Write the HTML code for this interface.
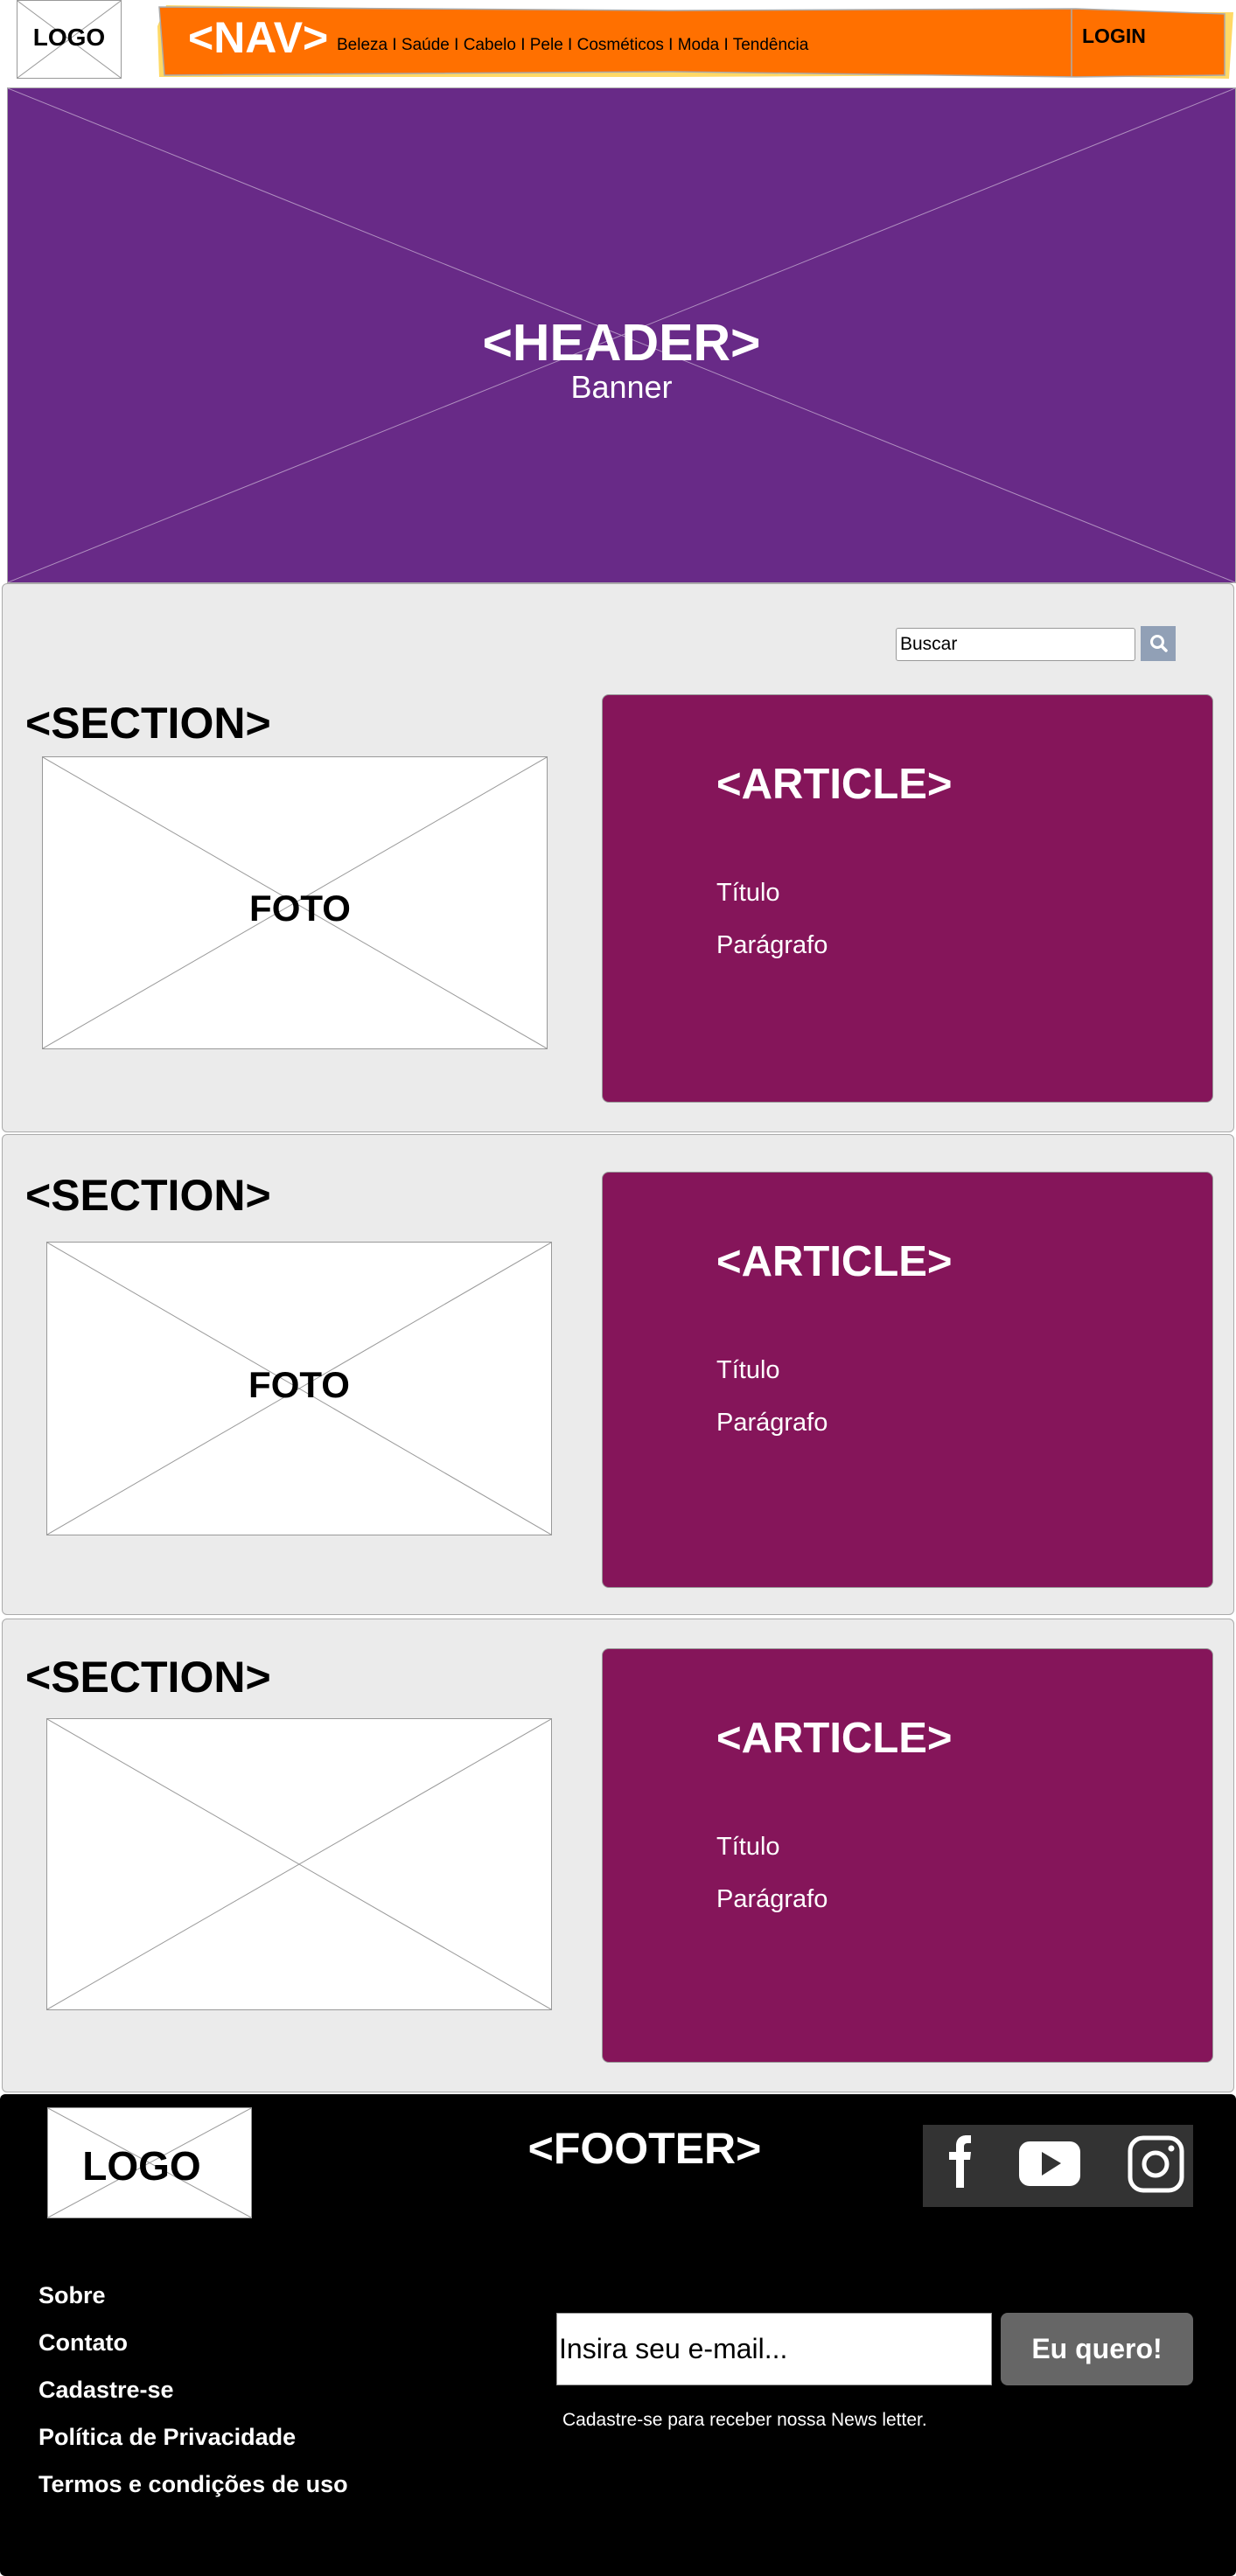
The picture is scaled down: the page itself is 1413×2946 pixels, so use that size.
<!DOCTYPE html>
<html><head><meta charset="utf-8"><style>
*{margin:0;padding:0;box-sizing:border-box}
body{width:1413px;height:2946px;position:relative;background:#fff;font-family:"Liberation Sans",Arial,sans-serif;overflow:hidden}
.a{position:absolute}
.x{position:absolute;background:#fff;border:1px solid #999}
.x svg{position:absolute;left:0;top:0;width:100%;height:100%}
.sec{position:absolute;left:2px;width:1409px;background:#ebebeb;border:1px solid #aaa;border-radius:6px}
.st{position:absolute;left:29px;font-weight:bold;font-size:50px;color:#000;line-height:1}
.art{position:absolute;left:688px;width:699px;background:#85155a;border:1px solid #999;border-radius:8px;color:#fff}
.art .h{position:absolute;left:130px;font-weight:bold;font-size:49px;line-height:1}
.art .t{position:absolute;left:130px;font-size:29px;line-height:1}
.foto{position:absolute;width:100%;text-align:center;font-weight:bold;font-size:42px;line-height:1}
.fl{position:absolute;left:44px;color:#fff;font-weight:bold;font-size:27px;line-height:1}
</style></head><body>
<div class="x" style="left:19px;top:0;width:120px;height:90px"><svg viewBox="0 0 100 100" preserveAspectRatio="none"><line x1="0" y1="0" x2="100" y2="100" stroke="#999" vector-effect="non-scaling-stroke"/><line x1="100" y1="0" x2="0" y2="100" stroke="#999" vector-effect="non-scaling-stroke"/></svg>
<div class="a" style="left:0;width:100%;top:26px;text-align:center;font-weight:bold;font-size:28px">LOGO</div></div>
<svg class="a" style="left:170px;top:0" width="1243" height="95">
<polygon points="20,6 640,14 1240,14 1235,90 1000,86 600,88 12,88 10,30" fill="#ffd966"/>
<polygon points="12,8 600,12 1060,10 1230,16 1230,86 1060,88 600,82 18,86" fill="#ff7000" stroke="#aaa" stroke-width="1.5"/>
<line x1="1055" y1="10" x2="1055" y2="88" stroke="#aaa" stroke-width="1.5"/>
</svg>
<div class="a" style="left:215px;top:18px;color:#fff;font-weight:bold;font-size:50px;line-height:1">&lt;NAV&gt;</div>
<div class="a" style="left:385px;top:42px;font-size:19px;line-height:1">Beleza I Saúde I Cabelo I Pele I Cosméticos I Moda I Tendência</div>
<div class="a" style="left:1237px;top:30px;font-weight:bold;font-size:23px;line-height:1">LOGIN</div>
<div class="a" style="left:8px;top:100px;width:1405px;height:567px;background:#682a87;border:1px solid #aaa">
<svg class="a" style="left:0;top:0" width="1403" height="565"><line x1="0" y1="0" x2="1403" y2="565" stroke="#b08fc0" stroke-width="1"/><line x1="1403" y1="0" x2="0" y2="565" stroke="#b08fc0" stroke-width="1"/></svg>
<div class="a" style="left:0;width:100%;top:262px;text-align:center;color:#fff;font-weight:bold;font-size:59px;line-height:1">&lt;HEADER&gt;</div>
<div class="a" style="left:0;width:100%;top:324px;text-align:center;color:#fff;font-size:36px;line-height:1">Banner</div>
</div>
<div class="sec" style="top:667px;height:628px"></div>
<div class="a" style="left:1024px;top:718px;width:274px;height:38px;background:#fff;border:1px solid #999;border-radius:3px;font-size:21px;padding:6px 4px">Buscar</div>
<div class="a" style="left:1304px;top:716px;width:40px;height:40px;background:#91a0b6"><svg width="40" height="40"><circle cx="19" cy="18" r="6.5" fill="none" stroke="#fff" stroke-width="3"/><line x1="24" y1="23" x2="29" y2="28" stroke="#fff" stroke-width="3.5" stroke-linecap="round"/></svg></div>
<div class="st" style="top:802px">&lt;SECTION&gt;</div>
<div class="x" style="left:48px;top:865px;width:578px;height:335px"><svg viewBox="0 0 100 100" preserveAspectRatio="none"><line x1="0" y1="0" x2="100" y2="100" stroke="#999" vector-effect="non-scaling-stroke"/><line x1="100" y1="0" x2="0" y2="100" stroke="#999" vector-effect="non-scaling-stroke"/></svg><div class="foto" style="top:152px;left:6px">FOTO</div></div>
<div class="art" style="top:794px;height:467px"><div class="h" style="top:78px">&lt;ARTICLE&gt;</div><div class="t" style="top:212px">Título</div><div class="t" style="top:272px">Parágrafo</div></div>
<div class="sec" style="top:1297px;height:550px"></div>
<div class="st" style="top:1342px">&lt;SECTION&gt;</div>
<div class="x" style="left:53px;top:1420px;width:578px;height:336px"><svg viewBox="0 0 100 100" preserveAspectRatio="none"><line x1="0" y1="0" x2="100" y2="100" stroke="#999" vector-effect="non-scaling-stroke"/><line x1="100" y1="0" x2="0" y2="100" stroke="#999" vector-effect="non-scaling-stroke"/></svg><div class="foto" style="top:142px">FOTO</div></div>
<div class="art" style="top:1340px;height:476px"><div class="h" style="top:78px">&lt;ARTICLE&gt;</div><div class="t" style="top:212px">Título</div><div class="t" style="top:272px">Parágrafo</div></div>
<div class="sec" style="top:1851px;height:542px"></div>
<div class="st" style="top:1893px">&lt;SECTION&gt;</div>
<div class="x" style="left:53px;top:1965px;width:578px;height:334px"><svg viewBox="0 0 100 100" preserveAspectRatio="none"><line x1="0" y1="0" x2="100" y2="100" stroke="#999" vector-effect="non-scaling-stroke"/><line x1="100" y1="0" x2="0" y2="100" stroke="#999" vector-effect="non-scaling-stroke"/></svg></div>
<div class="art" style="top:1885px;height:474px"><div class="h" style="top:78px">&lt;ARTICLE&gt;</div><div class="t" style="top:212px">Título</div><div class="t" style="top:272px">Parágrafo</div></div>
<div class="a" style="left:0;top:2395px;width:1413px;height:551px;background:#000;border-radius:6px"></div>
<div class="x" style="left:54px;top:2410px;width:234px;height:127px"><svg viewBox="0 0 100 100" preserveAspectRatio="none"><line x1="0" y1="0" x2="100" y2="100" stroke="#999" vector-effect="non-scaling-stroke"/><line x1="100" y1="0" x2="0" y2="100" stroke="#999" vector-effect="non-scaling-stroke"/></svg><div class="a" style="left:-9px;width:100%;top:43px;text-align:center;font-weight:bold;font-size:46px;line-height:1">LOGO</div></div>
<div class="a" style="left:537px;width:400px;top:2432px;text-align:center;color:#fff;font-weight:bold;font-size:50px;line-height:1">&lt;FOOTER&gt;</div>
<div class="a" style="left:1055px;top:2430px;width:309px;height:94px;background:#333">
<svg width="309" height="94">
<path d="M38 72 V40 H30 V31 H38 V24 C38 16 43 12 50 12 H55 V21 H51 C48 21 47 23 47 25 V31 H55 L54 40 H47 V72 Z" fill="#fff"/>
<rect x="110" y="19" width="70" height="51" rx="12" fill="#fff"/><polygon points="136,31 136,58 158,44" fill="#333"/>
<rect x="237" y="15" width="59" height="60" rx="15" fill="none" stroke="#fff" stroke-width="5"/><circle cx="266" cy="45" r="13" fill="none" stroke="#fff" stroke-width="5"/><circle cx="284" cy="27" r="3.5" fill="#fff"/>
</svg></div>
<div class="fl" style="top:2612px">Sobre</div>
<div class="fl" style="top:2666px">Contato</div>
<div class="fl" style="top:2720px">Cadastre-se</div>
<div class="fl" style="top:2774px">Política de Privacidade</div>
<div class="fl" style="top:2828px">Termos e condições de uso</div>
<div class="a" style="left:636px;top:2645px;width:498px;height:83px;background:#fff;border:1px solid #999;font-size:32px;padding:24px 2px;line-height:1">Insira seu e-mail...</div>
<div class="a" style="left:1144px;top:2645px;width:220px;height:83px;background:#666;border-radius:8px;color:#fff;font-weight:bold;font-size:32px;text-align:center;line-height:83px">Eu quero!</div>
<div class="a" style="left:643px;top:2757px;color:#fff;font-size:21px;line-height:1">Cadastre-se para receber nossa News letter.</div>
</body></html>
